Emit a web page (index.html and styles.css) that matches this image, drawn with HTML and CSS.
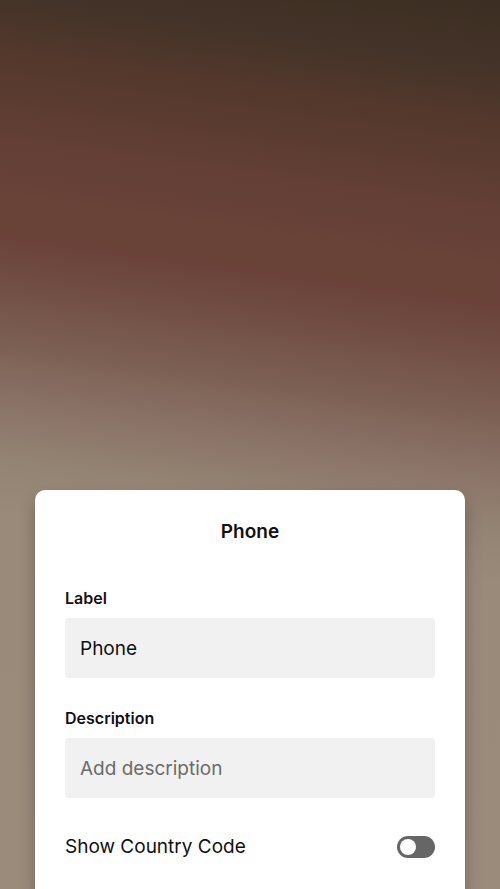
FILE: index.html
```html
<!DOCTYPE html>
<html lang="en">
<head>
<meta charset="UTF-8">
<meta name="viewport" content="width=device-width, initial-scale=1.0">
<title>Phone</title>
<link rel="stylesheet" href="styles.css">
</head>
<body>
    <main class="screen">
        <form class="panel">
            <h1 class="panel-title">Phone</h1>
            <div class="field">
                <label for="label">Label</label>
                <input type="text" id="label" name="label" value="Phone">
            </div>
            <div class="field">
                <label for="description">Description</label>
                <input type="text" id="description" name="description" placeholder="Add description">
            </div>
            <div class="toggle-row">
                <label for="country-code">Show Country Code</label>
                <input type="checkbox" class="toggle" id="country-code" name="country-code">
            </div>
        </form>
    </main>
</body>
</html>
```
FILE: styles.css
```css
* {
    box-sizing: border-box;
}

body {
    margin: 0;
    font-family: Inter, "Liberation Sans", sans-serif;
    color: #111;
}

.screen {
    min-height: 100vh;
    display: flex;
    flex-direction: column;
    justify-content: flex-end;
    padding: 0 35px;
    overflow: hidden;
    background: linear-gradient(188deg, #3c2e22 0%, #443328 7%, #54382c 13%, #633f35 22%, #694238 28%, #6a4239 32%, #704c42 36%, #7c5f53 43%, #8a7266 49%, #938373 55%, #9a8a79 61%, #9b8b7b 100%);
}

.panel {
    padding: 28px 30px;
    background: #fff;
    border-radius: 10px 10px 0 0;
    box-shadow: 0 10px 16px rgba(0, 0, 0, 0.25);
}

.panel-title {
    margin: 0 0 40px;
    font-size: 19px;
    line-height: 28px;
    font-weight: 600;
    text-align: center;
}

.field {
    display: flex;
    flex-direction: column;
    gap: 8px;
    margin-bottom: 28px;
}

.field label {
    font-size: 16px;
    line-height: 24px;
    font-weight: 600;
}

.field input {
    width: 100%;
    height: 60px;
    padding: 0 15px;
    border: none;
    border-radius: 3px;
    background: #f1f1f1;
    color: #111;
    font-family: inherit;
    font-size: 19px;
}

.field input::placeholder {
    color: #6b6b6b;
    opacity: 1;
}

.toggle-row {
    display: flex;
    justify-content: space-between;
    align-items: center;
    padding-top: 7px;
    font-size: 19px;
    line-height: 28px;
}

/* Toggle switch */
.toggle {
    appearance: none;
    display: flex;
    align-items: center;
    width: 38px;
    height: 22px;
    margin: 0;
    padding: 0 3px;
    border-radius: 11px;
    background: #666;
    cursor: pointer;
}

.toggle::before {
    content: "";
    width: 16px;
    height: 16px;
    border-radius: 50%;
    background: #fff;
}

.toggle:checked {
    justify-content: flex-end;
    background: #111;
}
```
